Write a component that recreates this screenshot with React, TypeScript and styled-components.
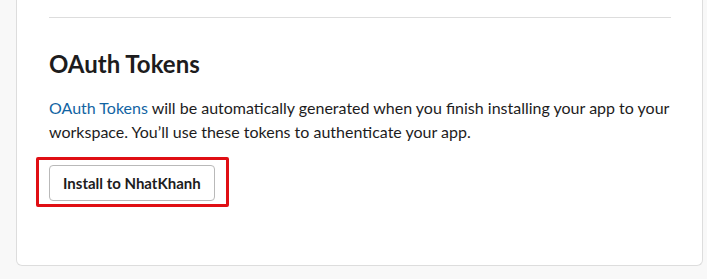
import React from "react";
import styled, { createGlobalStyle } from "styled-components";

const GlobalStyle = createGlobalStyle`
  html, body {
    margin: 0;
    padding: 0;
    background: #f8f8f8;
  }
  body {
    font-family: Lato, "Noto Sans", "Liberation Sans", sans-serif;
    color: #1d1c1d;
    -webkit-font-smoothing: antialiased;
  }
`;

const Page = styled.div`
  width: 707px;
  height: 279px;
  overflow: hidden;
  padding: 0 4px 0 16px;
  box-sizing: border-box;
`;

const Card = styled.section`
  background: #fff;
  border: 1px solid #dddddd;
  border-top: none;
  border-radius: 0 0 6px 6px;
  padding: 17px 31px 0 32px;
  height: 266px;
  box-sizing: border-box;
`;

const Divider = styled.hr`
  margin: 0;
  border: none;
  border-top: 1px solid #dddddd;
`;

const Title = styled.h2`
  margin: 31px 0 0;
  font-size: 24px;
  line-height: 30px;
  font-weight: 700;
`;

const Text = styled.p`
  margin: 17px 0 0;
  font-size: 16px;
  line-height: 24px;
`;

const Link = styled.a`
  color: #1264a3;
  text-decoration: none;
`;

const Highlight = styled.div`
  position: relative;
  display: inline-block;
  margin-top: 21px;

  &::after {
    content: "";
    position: absolute;
    top: -8px;
    left: -13px;
    right: -14px;
    bottom: -6px;
    border: 3px solid #e00f14;
    border-radius: 2px;
    pointer-events: none;
  }
`;

const Button = styled.button`
  display: block;
  height: 36px;
  padding: 0 13px;
  background: #fff;
  border: 1px solid #b9b9b9;
  border-radius: 4px;
  font-family: inherit;
  font-size: 15px;
  font-weight: 700;
  color: #1d1c1d;
  cursor: pointer;
`;

export default function App() {
  return (
    <>
      <GlobalStyle />
      <Page>
        <Card>
          <Divider />
          <Title>OAuth Tokens</Title>
          <Text>
            <Link href="#">OAuth Tokens</Link> will be automatically generated
            when you finish installing your app to your workspace. You’ll use
            these tokens to authenticate your app.
          </Text>
          <Highlight>
            <Button>Install to NhatKhanh</Button>
          </Highlight>
        </Card>
      </Page>
    </>
  );
}
